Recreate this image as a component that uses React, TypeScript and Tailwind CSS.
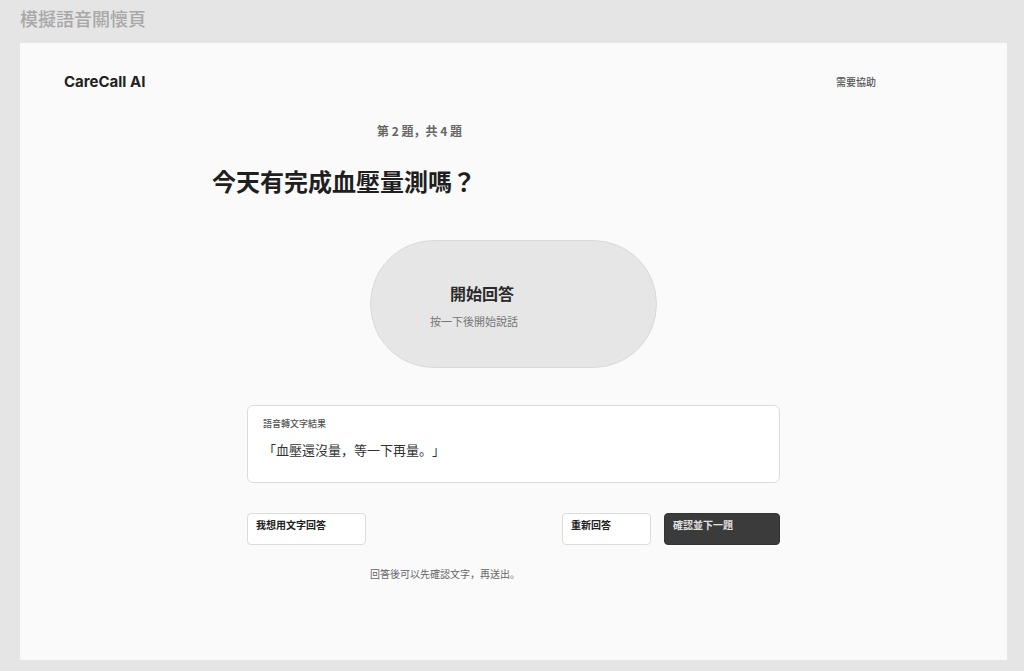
import React from "react";

const cjk = { fontFamily: 'Inter, "Noto Sans CJK JP", "Noto Sans", sans-serif' };
const tc = { fontFamily: '"Noto Sans CJK JP", Inter, sans-serif' };

export default function App() {
  return (
    <div className="w-[1024px] h-[671px] bg-[#e5e5e5] overflow-hidden [text-spacing-trim:space-all]" style={cjk}>
      <div className="h-[43px] pl-[20px] pt-[8px]">
        <div className="text-[18px] leading-[24px] font-medium text-[#a8a8a8]">模擬語音關懷頁</div>
      </div>
      <div className="ml-[20px] w-[987px] h-[617px] bg-[#fafafa] flex flex-col">
        <div className="mt-[29px] h-[20px] pl-[44px] pr-[131px] flex items-center justify-between">
          <div className="text-[15px] leading-[20px] font-bold text-[#222]">CareCall AI</div>
          <div className="text-[10px] leading-[14px] font-medium text-[#555]">需要協助</div>
        </div>
        <div className="mt-[31px] ml-[357px] text-[12px] leading-[16px] font-semibold text-[#666] whitespace-pre" style={tc}>第 2 題，共 4 題</div>
        <div className="mt-[26px] ml-[192px] text-[24px] leading-[32px] font-bold text-[#1f1f1f]" style={tc}>今天有完成血壓量測嗎？</div>
        <div className="mt-[43px] ml-[350px] w-[287px] h-[128px] rounded-full bg-[#e6e6e6] border border-[#d9d9d9] flex flex-col pt-[42px]">
          <div className="ml-[79px] text-[16px] leading-[22px] font-bold text-[#2a2a2a]">開始回答</div>
          <div className="mt-[10px] ml-[59px] text-[11px] leading-[14px] text-[#777]">按一下後開始說話</div>
        </div>
        <div className="mt-[37px] ml-[227px] w-[533px] h-[78px] bg-white border border-[#dcdcdc] rounded-[6px] pt-[12px] px-[15px]">
          <div className="text-[9px] leading-[12px] font-medium text-[#555]">語音轉文字結果</div>
          <div className="mt-[10px] text-[13px] leading-[20px] text-[#333]" style={tc}>「血壓還沒量，等一下再量。」</div>
        </div>
        <div className="mt-[30px] ml-[227px] w-[533px] h-[32px] flex justify-between">
          <div className="w-[119px] h-[32px] bg-white border border-[#dcdcdc] rounded-[4px] pl-[8px] pt-[4px] text-[10px] leading-[14px] font-bold text-[#222]">我想用文字回答</div>
          <div className="flex gap-[13px]">
            <div className="w-[89px] h-[32px] bg-white border border-[#dcdcdc] rounded-[4px] pl-[8px] pt-[4px] text-[10px] leading-[14px] font-bold text-[#222]">重新回答</div>
            <div className="w-[116px] h-[32px] bg-[#3b3b3b] border border-[#333] rounded-[4px] pl-[8px] pt-[4px] text-[10px] leading-[14px] font-bold text-[#e2e2e2]">確認並下一題</div>
          </div>
        </div>
        <div className="mt-[22px] ml-[350px] text-[10px] leading-[14px] text-[#666]" style={tc}>回答後可以先確認文字，再送出。</div>
      </div>
    </div>
  );
}
